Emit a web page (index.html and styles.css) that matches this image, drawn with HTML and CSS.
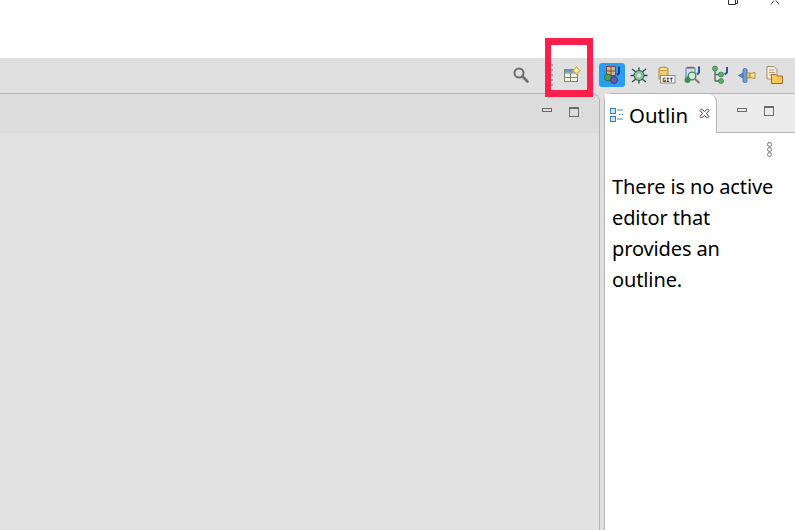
FILE: index.html
```html
<!DOCTYPE html>
<html lang="en">
<head>
<meta charset="utf-8">
<title>Eclipse</title>
<link rel="stylesheet" href="styles.css">
</head>
<body>
<div class="window">
  <header class="titlebar">
    <svg class="win-icon" width="12" height="6" viewBox="0 0 12 6"><path d="M1.500 0V4.500H8.500V0M8.500 3.500H10.500V0" fill="none" stroke="#333" stroke-width="1"/></svg>
    <svg class="win-icon close" width="12" height="6" viewBox="0 0 12 6"><path d="M1 4.500L4 0.500M9 4.500L6 0.500" fill="none" stroke="#444" stroke-width="1"/></svg>
  </header>
  <div class="toolbar">
    <svg class="search" width="18" height="18" viewBox="0 0 18 18"><circle cx="7" cy="7" r="4.500" fill="none" stroke="#6e6e6e" stroke-width="2"/><path d="M10.500 10.500L15.500 15.500" stroke="#6e6e6e" stroke-width="2.600" stroke-linecap="round"/></svg>
    <div class="grip"></div>
    <svg class="open-persp" width="18" height="18" viewBox="0 0 18 18">
      <rect x="1.500" y="3.500" width="13" height="12" fill="#f3f1e6" stroke="#7f8a6e"/>
      <rect x="2" y="4" width="9" height="2.500" fill="#5f9fd8"/>
      <path d="M1.500 7H14.500M1.500 11.500H14.500M7.500 7V15.500" stroke="#7f8a6e" fill="none"/>
      <path d="M13.500 0.500L15 3L17.500 4.500L15 6L13.500 8.500L12 6L9.500 4.500L12 3Z" fill="#fdeea5" stroke="#d9a53a" stroke-width="1"/>
    </svg>
    <div class="perspectives">
      <span class="persp active">
        <svg width="20" height="20" viewBox="0 0 20 20">
          <rect x="4.500" y="1.500" width="9" height="9" fill="#d9b58a" stroke="#7a4a3a"/>
          <path d="M9 1.500V10.500M4.500 6H13.500" stroke="#7a4a3a"/>
          <path d="M17 1.500V8L15 10" fill="none" stroke="#163f78" stroke-width="2"/>
          <circle cx="6" cy="12.500" r="3.500" fill="#4f9f4f" stroke="#2f6f3f"/>
          <circle cx="12" cy="15" r="3.500" fill="#6a5aa5" stroke="#3f3a75"/>
        </svg>
      </span>
      <span class="persp">
        <svg width="20" height="20" viewBox="0 0 20 20">
          <path d="M3 4L7 7M17 4L13 7M1.500 10.500H5M15 10.500H18.500M3 17L7 14M17 17L13 14M10 2.500V5M10 16V18.500" stroke="#1f4f47" stroke-width="1.300"/>
          <circle cx="10" cy="10.500" r="5" fill="#8fc0a0" stroke="#1f5f57"/>
          <circle cx="10" cy="10.500" r="2" fill="#d5ead5"/>
        </svg>
      </span>
      <span class="persp">
        <svg width="20" height="20" viewBox="0 0 20 20">
          <path d="M3 4C3 1.500 12 1.500 12 4V14H3Z" fill="#f0cf6a" stroke="#b08a2f"/>
          <ellipse cx="7.500" cy="4" rx="4.500" ry="1.700" fill="#f7e39b" stroke="#b08a2f" stroke-width=".8"/>
          <rect x="4.500" y="10.500" width="14.500" height="7.500" fill="#fff" stroke="#8a8a8a"/>
          <text x="11.750" y="16.500" class="git">GIT</text>
        </svg>
      </span>
      <span class="persp">
        <svg width="20" height="20" viewBox="0 0 20 20">
          <rect x="3" y="3" width="9" height="9" fill="#cfe0ee" stroke="#5a7f9f"/>
          <path d="M4 2.500H11" stroke="#b5523a" stroke-width="1.500"/>
          <path d="M16 1.500V7.500L14 9.500" fill="none" stroke="#1f5f9f" stroke-width="2"/>
          <circle cx="9" cy="11" r="3.800" fill="#d5ead5" stroke="#3f7f5f" stroke-width="1.300"/>
          <circle cx="4.500" cy="15" r="3" fill="#3f8f4f"/>
          <path d="M12 14L16.500 18" stroke="#8a7a6a" stroke-width="2"/>
        </svg>
      </span>
      <span class="persp">
        <svg width="20" height="20" viewBox="0 0 20 20">
          <path d="M5 3V16M5 9.500H10M5 16H10" fill="none" stroke="#4a6a5a" stroke-width="1.300"/>
          <circle cx="5" cy="3.500" r="2.500" fill="#5fae6a" stroke="#3a7f4a" stroke-width=".8"/>
          <circle cx="11" cy="9.500" r="2.500" fill="#5fae6a" stroke="#3a7f4a" stroke-width=".8"/>
          <circle cx="11" cy="16" r="2.500" fill="#5fae6a" stroke="#3a7f4a" stroke-width=".8"/>
          <path d="M17 2V7.500L14.500 9.500" fill="none" stroke="#1f5f9f" stroke-width="2"/>
        </svg>
      </span>
      <span class="persp">
        <svg width="20" height="20" viewBox="0 0 20 20">
          <path d="M1.500 10.500L7 7.500V13.500Z" fill="#5a8fd0" stroke="#3a65a5" stroke-width=".8"/>
          <rect x="6" y="3.500" width="4" height="14" rx="1.500" fill="#6f9fdc" stroke="#3a65a5" stroke-width=".8"/>
          <rect x="10" y="8" width="3" height="5" fill="#f0d070" stroke="#a57f2a" stroke-width=".8"/>
          <path d="M13 8.500L18 7.500V13.500L13 12.500Z" fill="#f7e08a" stroke="#a57f2a" stroke-width=".8"/>
        </svg>
      </span>
      <span class="persp">
        <svg width="20" height="20" viewBox="0 0 20 20">
          <path d="M3 1.500H10L13 4.500V14H3Z" fill="#f5ecd8" stroke="#a5946f"/>
          <path d="M5 5H10M5 7.500H11M5 10H8" stroke="#b5a585"/>
          <path d="M7.500 9.500H12L13.500 11H18.500V18.500H7.500Z" fill="#f7c957" stroke="#a5682a"/>
        </svg>
      </span>
    </div>
  </div>
  <main class="workbench">
    <section class="editor-area">
      <div class="editor-head">
        <button class="min-btn" aria-label="Minimize"></button>
        <button class="max-btn" aria-label="Maximize"></button>
      </div>
    </section>
    <section class="outline">
      <div class="tabbar">
        <div class="tab">
          <svg width="15" height="16" viewBox="0 0 15 16">
            <rect x="1.500" y="1.500" width="5" height="5" fill="#cfe3f5" stroke="#2f7fc0"/>
            <rect x="1.500" y="9.500" width="5" height="5" fill="#cfe3f5" stroke="#2f7fc0"/>
            <path d="M8 3H14M10 7.500H11.500M13 7.500H14M8 12H14" stroke="#4a86b5"/>
          </svg>
          <span class="tab-label">Outlin</span>
          <svg class="tab-close" width="11" height="11" viewBox="0 0 11 11"><path d="M1 2.500L2.500 1L5.500 3.500L8.500 1L10 2.500L7.500 5.500L10 8.500L8.500 10L5.500 7.500L2.500 10L1 8.500L3.500 5.500Z" fill="#fff" stroke="#444"/></svg>
        </div>
        <div class="tab-tools">
          <button class="min-btn" aria-label="Minimize"></button>
          <button class="max-btn" aria-label="Maximize"></button>
        </div>
      </div>
      <div class="outline-body">
        <div class="view-menu"><i></i><i></i><i></i></div>
        <p class="message">There is no active editor that provides an outline.</p>
      </div>
    </section>
  </main>
</div>
<div class="highlight"></div>
</body>
</html>
```
FILE: styles.css
```css
* { box-sizing: border-box; }
html, body { margin: 0; height: 100%; }
body { background: #fff; overflow: hidden; font-family: "Noto Sans", sans-serif; }
.window { height: 530px; display: flex; flex-direction: column; }
.titlebar { height: 58px; background: #fff; display: flex; justify-content: flex-end; align-items: flex-start; gap: 31px; padding-right: 13px; flex: none; }
.win-icon { display: block; }
.toolbar { height: 35px; flex: none; background: #e0e0e0; display: flex; align-items: center; padding: 0 8px 1px 0; justify-content: flex-end; }
.search { margin-right: 21px; }
.grip { width: 2px; height: 22px; margin-right: 10px; background: repeating-linear-gradient(#a6a6a6 0 2px, transparent 2px 5px); }
.open-persp { margin-right: 18px; }
.perspectives { display: flex; align-items: center; gap: 1px; }
.persp { width: 26px; height: 24px; display: flex; align-items: center; justify-content: center; border-radius: 3px; }
.persp.active { background: #2a9df4; }
.git { font: bold 6px "DejaVu Sans Mono", monospace; text-anchor: middle; fill: #222; }
.workbench { flex: 1; display: flex; background: #e0e0e0; min-height: 0; gap: 4px; }
.editor-area { width: 600px; flex: none; background: #e1e1e1; border: 1px solid #b4b4b4; border-width: 1px 1px 0 0; border-top-right-radius: 8px; }
.editor-head { height: 39px; background: #dcdcdc; border-top-right-radius: 8px; display: flex; justify-content: flex-end; align-items: center; padding: 0 20px 4px 0; gap: 17px; }
.min-btn, .max-btn { padding: 0; background: transparent; border: 1px solid #6b6b6b; display: block; }
.min-btn { width: 10px; height: 4px; margin-bottom: 3px; }
.max-btn { width: 10px; height: 10px; border-top-width: 2px; }
.outline { flex: 1; min-width: 0; background: #fff; border: 1px solid #b4b4b4; border-width: 1px 0 0 1px; border-top-left-radius: 8px; display: flex; flex-direction: column; }
.tabbar { height: 39px; flex: none; display: flex; background: #ececec; border-top-left-radius: 8px; }
.tab { width: 112px; flex: none; background: #fff; border-right: 1px solid #b4b4b4; border-top-right-radius: 8px; display: flex; align-items: center; padding: 3px 6px 0 4px; }
.tab-label { font-size: 20.4px; color: #000; margin-left: 5px; flex: 1; line-height: 1; }
.tab-close { flex: none; margin-bottom: 4px; }
.tab-tools { flex: 1; display: flex; justify-content: flex-end; align-items: center; gap: 17px; padding: 0 21px 4px 0; border-bottom: 1px solid #b4b4b4; }
.outline-body { flex: 1; background: #fff; padding: 9px 8px 0 7px; }
.view-menu { display: flex; flex-direction: column; gap: 0; align-items: flex-end; padding-right: 15px; height: 16px; }
.view-menu i { display: block; width: 5px; height: 5px; border: 1px solid #777; border-radius: 50%; }
.message { margin: 13px 0 0; font-size: 20px; letter-spacing: -0.12px; line-height: 31px; color: #000; }
.highlight { position: absolute; left: 545px; top: 38px; width: 48px; height: 59px; border: 6px solid #ff1f4b; border-top-width: 7px; border-bottom-width: 7px; }
```
